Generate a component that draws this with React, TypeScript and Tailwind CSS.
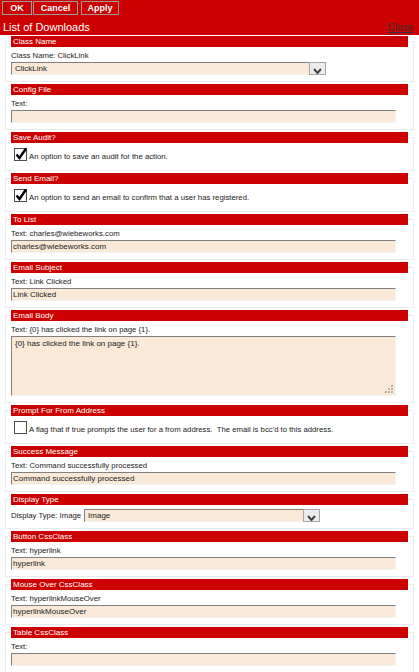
import React from 'react';

type Section = {
  title: string;
  kind: 'select' | 'text' | 'check' | 'textarea' | 'inline';
  label: string;
  value?: string;
  checked?: boolean;
};

const sections: Section[] = [
  { title: 'Class Name', kind: 'select', label: 'Class Name: ClickLink', value: 'ClickLink' },
  { title: 'Config File', kind: 'text', label: 'Text:', value: '' },
  { title: 'Save Audit?', kind: 'check', checked: true, label: 'An option to save an audit for the action.' },
  { title: 'Send Email?', kind: 'check', checked: true, label: 'An option to send an email to confirm that a user has registered.' },
  { title: 'To List', kind: 'text', label: 'Text: charles@wiebeworks.com', value: 'charles@wiebeworks.com' },
  { title: 'Email Subject', kind: 'text', label: 'Text: Link Clicked', value: 'Link Clicked' },
  { title: 'Email Body', kind: 'textarea', label: 'Text: {0} has clicked the link on page {1}.', value: '{0} has clicked the link on page {1}.' },
  { title: 'Prompt For From Address', kind: 'check', checked: false, label: "A flag that if true prompts the user for a from address.  The email is bcc'd to this address." },
  { title: 'Success Message', kind: 'text', label: 'Text: Command successfully processed', value: 'Command successfully processed' },
  { title: 'Display Type', kind: 'inline', label: 'Display Type: Image', value: 'Image' },
  { title: 'Button CssClass', kind: 'text', label: 'Text: hyperlink', value: 'hyperlink' },
  { title: 'Mouse Over CssClass', kind: 'text', label: 'Text: hyperlinkMouseOver', value: 'hyperlinkMouseOver' },
  { title: 'Table CssClass', kind: 'text', label: 'Text:', value: '' },
];

const boxBorder =
  'border border-t-[#808080] border-l-[#808080] border-r-[#f3f3f3] border-b-[#f3f3f3] bg-[#f9e9d6]';

function DropSelect({ value, width }: { value: string; width: string }) {
  return (
    <div className={`${boxBorder} ${width} h-[13px] flex items-center`}>
      <span className="flex-1 pl-[3px] text-[8px] leading-[11px] text-[#222]">{value}</span>
      <span className="w-[17px] h-[13px] -mt-[1px] -mr-[1px] border border-[#a5a5a5] bg-[#ececec] flex items-end justify-center">
        <svg width="9" height="6" viewBox="0 0 9 6">
          <path d="M1 1 L4.5 5 L8 1" fill="none" stroke="#444" strokeWidth="2" />
        </svg>
      </span>
    </div>
  );
}

function CheckBox({ checked }: { checked?: boolean }) {
  return (
    <span className="relative w-[13px] h-[13px] shrink-0 border border-[#4d4d4d] bg-white">
      {checked && (
        <svg className="absolute -left-[1px] -top-[3px]" width="14" height="15" viewBox="0 0 14 15">
          <path d="M2.5 8.5 L5.5 12 L12 2.5" fill="none" stroke="#000" strokeWidth="2.4" />
        </svg>
      )}
    </span>
  );
}

function Grip() {
  return (
    <svg className="absolute right-[2px] bottom-[2px]" width="9" height="9" viewBox="0 0 9 9">
      {[
        [7, 1],
        [4, 4],
        [7, 4],
        [1, 7],
        [4, 7],
        [7, 7],
      ].map(([x, y], i) => (
        <rect key={i} x={x} y={y} width="2" height="2" fill="#b8b0a6" />
      ))}
    </svg>
  );
}

function Field({ s }: { s: Section }) {
  const isCheck = s.kind === 'check';
  return (
    <fieldset
      className={`mx-[5px] mb-[2px] border border-[#ebebeb] px-[5px] ${isCheck ? 'pb-[9px]' : 'pb-[6px]'}`}
    >
      <legend className="w-full h-[11px] bg-[#cc0000] pl-[2px] text-[8px] leading-[11px] text-white">
        {s.title}
      </legend>

      {isCheck && (
        <div className="pt-[5px] pl-[3px] flex items-end h-[18px] gap-[2px]">
          <CheckBox checked={s.checked} />
          <span className="text-[7.75px] leading-[9px] text-[#222] whitespace-pre">{s.label}</span>
        </div>
      )}

      {s.kind === 'inline' && (
        <div className="pt-[4px] flex items-center gap-[3px]">
          <span className="text-[7.75px] leading-[11px] text-[#222]">{s.label}</span>
          <DropSelect value={s.value ?? ''} width="w-[236px]" />
        </div>
      )}

      {(s.kind === 'text' || s.kind === 'select' || s.kind === 'textarea') && (
        <div className="pt-[3px]">
          <div className="h-[11px] text-[7.75px] leading-[11px] text-[#222]">{s.label}</div>
          <div className="mt-[1px]">
            {s.kind === 'select' && <DropSelect value={s.value ?? ''} width="w-[315px]" />}
            {s.kind === 'text' && (
              <div className={`${boxBorder} w-[97%] h-[13px] pl-[1px] text-[8px] leading-[11px] text-[#222]`}>
                {s.value}
              </div>
            )}
            {s.kind === 'textarea' && (
              <div className={`${boxBorder} relative w-[97%] h-[60px] pl-[3px] pt-[1px] text-[8px] leading-[11px] text-[#222]`}>
                {s.value}
                <Grip />
              </div>
            )}
          </div>
        </div>
      )}
    </fieldset>
  );
}

export default function App() {
  return (
    <div className="w-[419px] min-h-[672px] bg-white font-['Liberation_Sans',Arial,sans-serif] overflow-hidden">
      {/* toolbar + title */}
      <div className="h-[35px] bg-[#cc0000] mb-[1px]">
        <div className="flex pt-[1px] pl-[2px]">
          <button className="w-[30px] h-[14px] mr-[1px] border border-[#9c9c9c] bg-[#cc0000] text-[9px] font-bold leading-[12px] text-white">
            OK
          </button>
          <button className="w-[45px] h-[14px] mr-[3px] border border-[#9c9c9c] bg-[#cc0000] text-[9px] font-bold leading-[12px] text-white">
            Cancel
          </button>
          <button className="w-[38px] h-[14px] border border-[#9c9c9c] bg-[#cc0000] text-[9px] font-bold leading-[12px] text-white">
            Apply
          </button>
        </div>
        <div className="flex items-end justify-between h-[20px] pl-[3px] pr-[6px] pb-[2px]">
          <span className="text-[11px] leading-[12px] text-white">List of Downloads</span>
          <a className="text-[10px] leading-[11px] text-[#333] underline">Close</a>
        </div>
      </div>

      {sections.map((s) => (
        <Field key={s.title} s={s} />
      ))}
    </div>
  );
}
